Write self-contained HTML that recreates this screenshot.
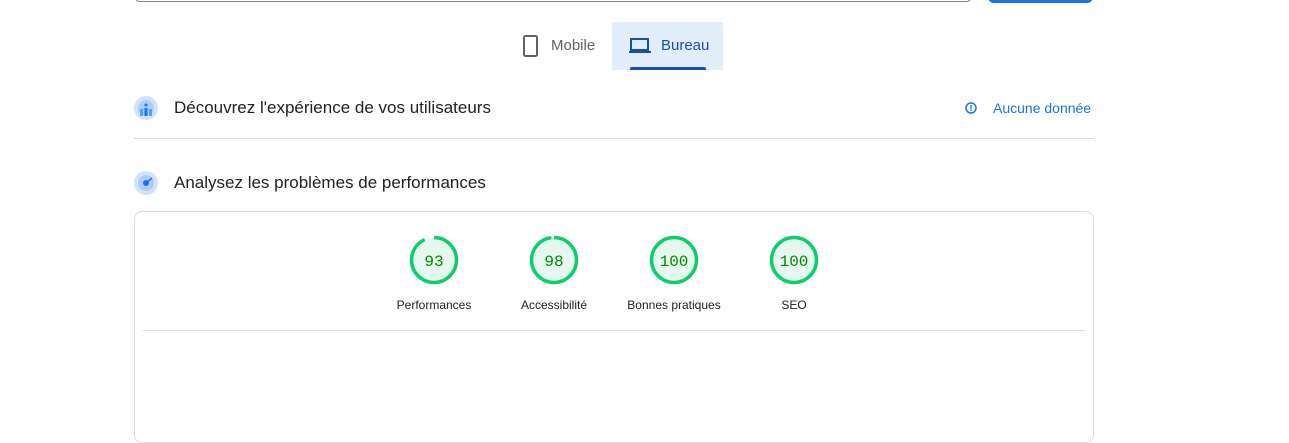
<!DOCTYPE html><html><head><style>
body{margin:0;width:1289px;height:428px;background:#fff;font-family:"Liberation Sans",sans-serif;position:relative;overflow:hidden}
.a{position:absolute}
.gl{position:absolute;top:298px;font-size:12px;color:#202124;width:120px;text-align:center}
.h{font-size:17px;color:#202124}
</style></head><body>
<div class="a" style="left:134px;top:-10px;width:836px;height:11px;border:1px solid #80868b;border-top:none;border-radius:0 0 6px 6px"></div>
<div class="a" style="left:988px;top:-10px;width:105px;height:13px;background:#1a73e8;border-radius:0 0 6px 6px"></div>
<div class="a" style="left:612px;top:22px;width:111px;height:48px;background:#e3eefc"></div>
<div class="a" style="left:630px;top:67px;width:76px;height:3px;background:#1a4fa8;border-radius:2px 2px 0 0"></div>
<svg class="a" style="left:520px;top:34px" width="22" height="24" viewBox="0 0 22 24"><rect x="4" y="2" width="13" height="20" rx="1.5" fill="none" stroke="#5f6368" stroke-width="2"/></svg>
<div class="a" style="left:551px;top:37px;font-size:15px;color:#5f6368">Mobile</div>
<svg class="a" style="left:628px;top:36px" width="24" height="20" viewBox="0 0 24 20"><rect x="3" y="3" width="17" height="11" fill="none" stroke="#1a4fa8" stroke-width="2"/><rect x="1" y="15" width="22" height="2" fill="#1a4fa8"/></svg>
<div class="a" style="left:661px;top:37px;font-size:15px;color:#1a4fa8">Bureau</div>
<svg class="a" style="left:134px;top:96px" width="24" height="24"><circle cx="12" cy="12" r="12" fill="#d2e3fc"/><circle cx="12" cy="12" r="8" fill="#aecbfa"/><circle cx="12" cy="9" r="1.5" fill="#1a73e8"/><rect x="6" y="13" width="3" height="7" fill="#4da3ff"/><rect x="10.5" y="12" width="3" height="8" fill="#1a73e8"/><rect x="15" y="13" width="3" height="7" fill="#4da3ff"/></svg>
<div class="a h" style="left:174px;top:98px">Découvrez l'expérience de vos utilisateurs</div>
<svg class="a" style="left:964px;top:101px" width="14" height="14"><circle cx="7" cy="7" r="5" fill="none" stroke="#1a73e8" stroke-width="1.5"/><rect x="6.3" y="4" width="1.4" height="4" fill="#1a73e8"/><rect x="6.3" y="8.8" width="1.4" height="1.4" fill="#1a73e8"/></svg>
<div class="a" style="left:993px;top:100px;font-size:14px;color:#1a73e8">Aucune donnée</div>
<div class="a" style="left:134px;top:138px;width:960px;height:1px;background:#dadce0"></div>
<svg class="a" style="left:134px;top:171px" width="24" height="24"><circle cx="12" cy="12" r="12" fill="#d2e3fc"/><circle cx="12" cy="12" r="8" fill="#aecbfa"/><circle cx="12" cy="12" r="3" fill="#1a73e8"/><path d="M12 12 L18 7" stroke="#1a73e8" stroke-width="1.5"/></svg>
<div class="a h" style="left:174px;top:173px">Analysez les problèmes de performances</div>
<div class="a" style="left:134px;top:211px;width:958px;height:230px;border:1px solid #dadce0;border-radius:8px"></div>
<div class="a" style="left:143px;top:330px;width:942px;height:1px;background:#dadce0"></div>
<svg class="a" style="left:0;top:0" width="1289" height="428">
<g fill="#e6f8ee" stroke="#0cce6b" stroke-width="3.5">
<circle cx="434" cy="260" r="22.5" stroke-dasharray="131.5 141.4" transform="rotate(-90 434 260)"/>
<circle cx="554" cy="260" r="22.5" stroke-dasharray="138.5 141.4" transform="rotate(-90 554 260)"/>
<circle cx="674" cy="260" r="22.5"/>
<circle cx="794" cy="260" r="22.5"/>
</g>
<g font-family="Liberation Mono,monospace" font-size="16" fill="#008800" text-anchor="middle">
<text x="434" y="266">93</text><text x="554" y="266">98</text><text x="674" y="266">100</text><text x="794" y="266">100</text></g>
</svg>
<div class="gl" style="left:374px">Performances</div>
<div class="gl" style="left:494px">Accessibilité</div>
<div class="gl" style="left:614px">Bonnes pratiques</div>
<div class="gl" style="left:734px">SEO</div>
</body></html>
